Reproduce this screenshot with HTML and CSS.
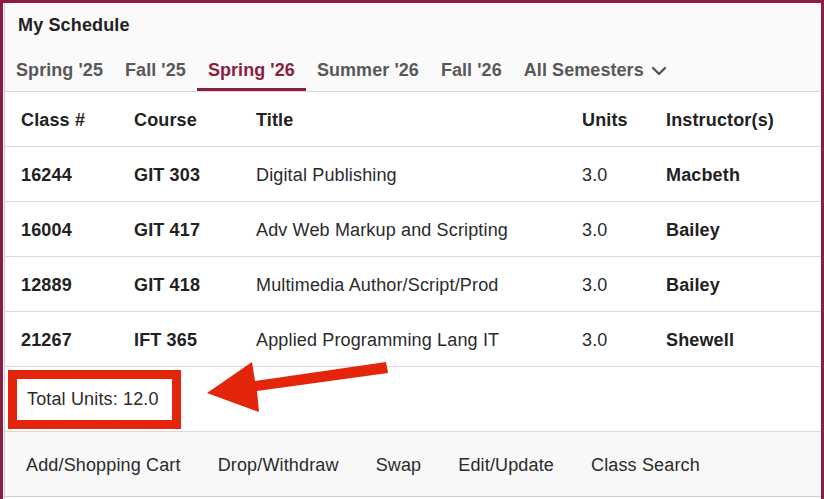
FILE: index.html
```html
<!DOCTYPE html>
<html lang="en">
<head>
  <meta charset="UTF-8">
  <title>My Schedule</title>
  <link rel="stylesheet" href="styles.css">
</head>
<body>
  <div class="frame">
    <div class="panel">
      <div class="schedule-head">
        <h2 class="title">My Schedule</h2>
        <nav class="tabs">
          <a class="tab">Spring '25</a>
          <a class="tab">Fall '25</a>
          <a class="tab active">Spring '26</a>
          <a class="tab">Summer '26</a>
          <a class="tab">Fall '26</a>
          <a class="tab more">All Semesters
            <svg class="chevron" width="16" height="10" viewBox="0 0 16 10">
              <polyline points="2,2 8,8 14,2" fill="none" stroke="#555" stroke-width="2.4" stroke-linecap="round" stroke-linejoin="round"/>
            </svg>
          </a>
        </nav>
      </div>

      <div class="classes">
        <div class="row head">
          <div>Class #</div><div>Course</div><div>Title</div><div>Units</div><div>Instructor(s)</div>
        </div>
        <div class="row">
          <div class="b">16244</div><div class="b">GIT 303</div><div>Digital Publishing</div><div>3.0</div><div class="b">Macbeth</div>
        </div>
        <div class="row">
          <div class="b">16004</div><div class="b">GIT 417</div><div>Adv Web Markup and Scripting</div><div>3.0</div><div class="b">Bailey</div>
        </div>
        <div class="row">
          <div class="b">12889</div><div class="b">GIT 418</div><div>Multimedia Author/Script/Prod</div><div>3.0</div><div class="b">Bailey</div>
        </div>
        <div class="row">
          <div class="b">21267</div><div class="b">IFT 365</div><div>Applied Programming Lang IT</div><div>3.0</div><div class="b">Shewell</div>
        </div>
      </div>

      <div class="total">Total Units: 12.0</div>

      <div class="actions">
        <a>Add/Shopping Cart</a>
        <a>Drop/Withdraw</a>
        <a>Swap</a>
        <a>Edit/Update</a>
        <a>Class Search</a>
      </div>
    </div>
  </div>

  <!-- callout: box round the total and arrow pointing at it -->
  <div class="callout-box"></div>
  <svg class="callout-arrow" width="824" height="499" viewBox="0 0 824 499">
    <polygon points="207,393 252,362 255,381 386,362 388,373 257,391 259,412" fill="#e3260b"/>
  </svg>
</body>
</html>
```

FILE: styles.css
```css
body {
  margin: 0;
  position: relative;
  font-family: "Liberation Sans", Arial, sans-serif;
  font-size: 18px;
  letter-spacing: 0.15px;
  color: #2b2b2b;
  background: #fff;
}
.frame {
  box-sizing: border-box;
  width: 824px;
  height: 499px;
  overflow: hidden;
  border: 3px solid #8c1d40;
  border-bottom: none;
  padding-left: 1px;
  background: #fff;
}
.panel {
  height: 100%;
  border-left: 1px solid #d0d0d0;
  background: #fff;
}
.schedule-head {
  background: #fafafa;
  padding-top: 11px;
  border-bottom: 1px solid #d6d6d6;
}
.title {
  margin: 0;
  padding-left: 13px;
  font-size: 18px;
  line-height: 22px;
  color: #222;
}
.tabs {
  display: flex;
  margin-top: 17px;
  letter-spacing: 0.07px;
}
.tab {
  padding: 6px 11px 7px;
  line-height: 22px;
  font-weight: bold;
  color: #585858;
  border-bottom: 3px solid transparent;
  cursor: pointer;
}
.tab.active {
  color: #8c1d40;
  border-bottom-color: #8c1d40;
}
.tab.more {
  display: flex;
  align-items: center;
  gap: 7px;
}
.chevron {
  margin-top: 1px;
}
.row {
  display: grid;
  grid-template-columns: 113px 122px 326px 84px 1fr;
  align-items: center;
  height: 52px;
  padding-top: 2px;
  border-bottom: 1px solid #d9d9d9;
}
.row > div {
  padding-left: 16px;
  white-space: nowrap;
}
.row.head div,
.row .b {
  font-weight: bold;
  color: #222;
}
.total {
  height: 65px;
  box-sizing: border-box;
  display: flex;
  align-items: center;
  padding-left: 22px;
  border-bottom: 1px solid #d9d9d9;
}
.actions {
  display: flex;
  align-items: center;
  gap: 37px;
  height: 62px;
  padding: 2px 0 0 21px;
  background: #f8f8f8;
  border-bottom: 1px solid #cfcfcf;
}
.actions a {
  color: #2b2b2b;
  cursor: pointer;
}
.callout-box {
  position: absolute;
  left: 8px;
  top: 370px;
  width: 173px;
  height: 59px;
  box-sizing: border-box;
  border: 9px solid #e3260b;
}
.callout-arrow {
  position: absolute;
  left: 0;
  top: 0;
  pointer-events: none;
}
```
